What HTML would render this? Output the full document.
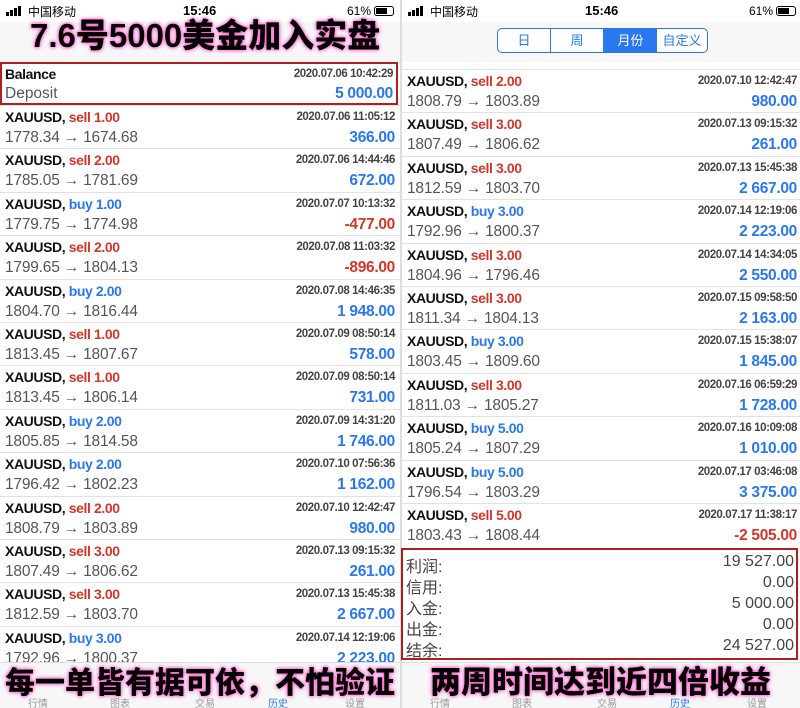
<!DOCTYPE html>
<html><head><meta charset="utf-8"><style>
*{margin:0;padding:0;box-sizing:border-box}
body{width:800px;height:708px;overflow:hidden;background:#fff;position:relative;font-family:"Liberation Sans","Noto Sans CJK SC",sans-serif;}
.p{position:absolute;top:0;width:400px;height:708px;overflow:hidden;background:#fff}
.sb{position:absolute;top:0;left:0;width:400px;height:22px;font-size:12px;color:#000}
.bars{position:absolute;left:6px;top:6px;width:20px;height:10px}
.bars i{position:absolute;bottom:0;width:3px;background:#000}
.r{position:absolute;left:0;width:400px;height:43.4px;border-top:1px solid #e2e2e2}
.t{position:absolute;left:5px;top:3px;font-size:14px;font-weight:bold;color:#111;letter-spacing:-0.4px}
.s{color:#d3372a}.b{color:#2a78f0}
.d{position:absolute;right:5px;top:5px;font-size:11.5px;font-weight:bold;color:#444;letter-spacing:-0.4px}
.pr{position:absolute;left:5px;top:23px;font-size:15.5px;color:#555;letter-spacing:-0.2px}
.v{position:absolute;right:5px;top:23px;font-size:15.5px;font-weight:bold;color:#2a78f0;letter-spacing:-0.3px}
.v.n{color:#d3372a}
.tab{position:absolute;top:662px;left:0;width:400px;height:46px;background:#f7f7f7;border-top:1px solid #ddd}
.tab span{position:absolute;top:32px;font-size:10px;color:#999}
.cap{position:absolute;font-weight:900;color:#000;text-shadow:0 0 3px #ff5bd0,0 0 5px #ff5bd0,0 0 2px #fff;white-space:nowrap}
.sm{position:absolute;left:401px;top:548px;width:397px;height:112px;border:2px solid #b01f1f}
.sm div{position:absolute;left:3px;width:388px;font-size:16px;color:#444}
.sm div b{position:absolute;right:0;font-weight:normal}
</style></head><body>
<div class="p" style="left:0">
<div class="sb"><div class="bars"><i style="left:0;height:4px"></i><i style="left:4px;height:6px"></i><i style="left:8px;height:8px"></i><i style="left:12px;height:10px"></i></div><span style="position:absolute;left:28px;top:3px">中国移动</span><span style="position:absolute;left:183px;top:3px;font-weight:bold;font-size:13px">15:46</span><span style="position:absolute;left:347px;top:4px">61%</span><span style="position:absolute;left:374px;top:6px;width:20px;height:10px;border:1px solid #000;border-radius:3px"><i style="position:absolute;left:1px;top:1px;width:11px;height:6px;background:#000"></i></span></div>
<div style="position:absolute;left:0;top:22px;width:400px;height:40px;background:#f7f7f7"></div>
<div style="position:absolute;left:0;top:62px;width:398px;height:43px;border:2px solid #b01f1f">
<div style="position:absolute;left:3px;top:2px;font-size:14px;font-weight:bold;color:#111;letter-spacing:-0.4px">Balance</div><div style="position:absolute;right:3px;top:4px;font-size:11.5px;font-weight:bold;color:#444;letter-spacing:-0.4px">2020.07.06 10:42:29</div><div style="position:absolute;left:3px;top:21px;font-size:15.5px;color:#555">Deposit</div><div style="position:absolute;right:3px;top:21px;font-size:15.5px;font-weight:bold;color:#2a78f0;letter-spacing:-0.3px">5 000.00</div></div>
<div class="r" style="top:105px"><div class="t">XAUUSD, <span class="s">sell 1.00</span></div><div class="d">2020.07.06 11:05:12</div><div class="pr">1778.34 → 1674.68</div><div class="v">366.00</div></div>
<div class="r" style="top:148.4px"><div class="t">XAUUSD, <span class="s">sell 2.00</span></div><div class="d">2020.07.06 14:44:46</div><div class="pr">1785.05 → 1781.69</div><div class="v">672.00</div></div>
<div class="r" style="top:191.8px"><div class="t">XAUUSD, <span class="b">buy 1.00</span></div><div class="d">2020.07.07 10:13:32</div><div class="pr">1779.75 → 1774.98</div><div class="v n">-477.00</div></div>
<div class="r" style="top:235.2px"><div class="t">XAUUSD, <span class="s">sell 2.00</span></div><div class="d">2020.07.08 11:03:32</div><div class="pr">1799.65 → 1804.13</div><div class="v n">-896.00</div></div>
<div class="r" style="top:278.6px"><div class="t">XAUUSD, <span class="b">buy 2.00</span></div><div class="d">2020.07.08 14:46:35</div><div class="pr">1804.70 → 1816.44</div><div class="v">1 948.00</div></div>
<div class="r" style="top:322px"><div class="t">XAUUSD, <span class="s">sell 1.00</span></div><div class="d">2020.07.09 08:50:14</div><div class="pr">1813.45 → 1807.67</div><div class="v">578.00</div></div>
<div class="r" style="top:365.4px"><div class="t">XAUUSD, <span class="s">sell 1.00</span></div><div class="d">2020.07.09 08:50:14</div><div class="pr">1813.45 → 1806.14</div><div class="v">731.00</div></div>
<div class="r" style="top:408.8px"><div class="t">XAUUSD, <span class="b">buy 2.00</span></div><div class="d">2020.07.09 14:31:20</div><div class="pr">1805.85 → 1814.58</div><div class="v">1 746.00</div></div>
<div class="r" style="top:452.2px"><div class="t">XAUUSD, <span class="b">buy 2.00</span></div><div class="d">2020.07.10 07:56:36</div><div class="pr">1796.42 → 1802.23</div><div class="v">1 162.00</div></div>
<div class="r" style="top:495.6px"><div class="t">XAUUSD, <span class="s">sell 2.00</span></div><div class="d">2020.07.10 12:42:47</div><div class="pr">1808.79 → 1803.89</div><div class="v">980.00</div></div>
<div class="r" style="top:539px"><div class="t">XAUUSD, <span class="s">sell 3.00</span></div><div class="d">2020.07.13 09:15:32</div><div class="pr">1807.49 → 1806.62</div><div class="v">261.00</div></div>
<div class="r" style="top:582.4px"><div class="t">XAUUSD, <span class="s">sell 3.00</span></div><div class="d">2020.07.13 15:45:38</div><div class="pr">1812.59 → 1803.70</div><div class="v">2 667.00</div></div>
<div class="r" style="top:625.8px"><div class="t">XAUUSD, <span class="b">buy 3.00</span></div><div class="d">2020.07.14 12:19:06</div><div class="pr">1792.96 → 1800.37</div><div class="v">2 223.00</div></div>
<div class="tab"><span style="left:28px">行情</span><span style="left:110px">图表</span><span style="left:195px">交易</span><span style="left:268px;color:#2a78f0">历史</span><span style="left:345px">设置</span></div>
</div>
<div class="p" style="left:400px;border-left:2px solid #ddd">
<div class="sb"><div class="bars"><i style="left:0;height:4px"></i><i style="left:4px;height:6px"></i><i style="left:8px;height:8px"></i><i style="left:12px;height:10px"></i></div><span style="position:absolute;left:28px;top:3px">中国移动</span><span style="position:absolute;left:183px;top:3px;font-weight:bold;font-size:13px">15:46</span><span style="position:absolute;left:347px;top:4px">61%</span><span style="position:absolute;left:374px;top:6px;width:20px;height:10px;border:1px solid #000;border-radius:3px"><i style="position:absolute;left:1px;top:1px;width:11px;height:6px;background:#000"></i></span></div>
<div style="position:absolute;left:0;top:22px;width:400px;height:40px;background:#f7f7f7"></div>
<div style="position:absolute;left:95px;top:28px;width:211px;height:25px;border:1px solid #2a78f0;border-radius:5px;overflow:hidden;display:flex;font-size:13px;color:#2a78f0;background:#fff">
<div style="width:53px;text-align:center;line-height:23px;border-right:1px solid #2a78f0">日</div><div style="width:53px;text-align:center;line-height:23px;border-right:1px solid #2a78f0">周</div><div style="width:53px;text-align:center;line-height:23px;background:#2a78f0;color:#fff">月份</div><div style="flex:1;text-align:center;line-height:23px">自定义</div></div>
<div class="r" style="top:69px"><div class="t">XAUUSD, <span class="s">sell 2.00</span></div><div class="d">2020.07.10 12:42:47</div><div class="pr">1808.79 → 1803.89</div><div class="v">980.00</div></div>
<div class="r" style="top:112.4px"><div class="t">XAUUSD, <span class="s">sell 3.00</span></div><div class="d">2020.07.13 09:15:32</div><div class="pr">1807.49 → 1806.62</div><div class="v">261.00</div></div>
<div class="r" style="top:155.8px"><div class="t">XAUUSD, <span class="s">sell 3.00</span></div><div class="d">2020.07.13 15:45:38</div><div class="pr">1812.59 → 1803.70</div><div class="v">2 667.00</div></div>
<div class="r" style="top:199.2px"><div class="t">XAUUSD, <span class="b">buy 3.00</span></div><div class="d">2020.07.14 12:19:06</div><div class="pr">1792.96 → 1800.37</div><div class="v">2 223.00</div></div>
<div class="r" style="top:242.6px"><div class="t">XAUUSD, <span class="s">sell 3.00</span></div><div class="d">2020.07.14 14:34:05</div><div class="pr">1804.96 → 1796.46</div><div class="v">2 550.00</div></div>
<div class="r" style="top:286px"><div class="t">XAUUSD, <span class="s">sell 3.00</span></div><div class="d">2020.07.15 09:58:50</div><div class="pr">1811.34 → 1804.13</div><div class="v">2 163.00</div></div>
<div class="r" style="top:329.4px"><div class="t">XAUUSD, <span class="b">buy 3.00</span></div><div class="d">2020.07.15 15:38:07</div><div class="pr">1803.45 → 1809.60</div><div class="v">1 845.00</div></div>
<div class="r" style="top:372.8px"><div class="t">XAUUSD, <span class="s">sell 3.00</span></div><div class="d">2020.07.16 06:59:29</div><div class="pr">1811.03 → 1805.27</div><div class="v">1 728.00</div></div>
<div class="r" style="top:416.2px"><div class="t">XAUUSD, <span class="b">buy 5.00</span></div><div class="d">2020.07.16 10:09:08</div><div class="pr">1805.24 → 1807.29</div><div class="v">1 010.00</div></div>
<div class="r" style="top:459.6px"><div class="t">XAUUSD, <span class="b">buy 5.00</span></div><div class="d">2020.07.17 03:46:08</div><div class="pr">1796.54 → 1803.29</div><div class="v">3 375.00</div></div>
<div class="r" style="top:503px"><div class="t">XAUUSD, <span class="s">sell 5.00</span></div><div class="d">2020.07.17 11:38:17</div><div class="pr">1803.43 → 1808.44</div><div class="v n">-2 505.00</div></div>
<div class="tab"><span style="left:28px">行情</span><span style="left:110px">图表</span><span style="left:195px">交易</span><span style="left:268px;color:#2a78f0">历史</span><span style="left:345px">设置</span></div>
</div>
<div class="sm">
<div style="top:3px">利润:<b>19 527.00</b></div>
<div style="top:24px">信用:<b>0.00</b></div>
<div style="top:45px">入金:<b>5 000.00</b></div>
<div style="top:66px">出金:<b>0.00</b></div>
<div style="top:87px">结余:<b>24 527.00</b></div>
</div>
<div class="cap" style="left:30px;top:16px;font-size:33px;line-height:40px">7.6号5000美金加入实盘</div>
<div class="cap" style="left:5px;top:665px;font-size:30px;line-height:38px">每一单皆有据可依，不怕验证</div>
<div class="cap" style="left:430px;top:664px;font-size:31px;line-height:38px">两周时间达到近四倍收益</div>
</body></html>
